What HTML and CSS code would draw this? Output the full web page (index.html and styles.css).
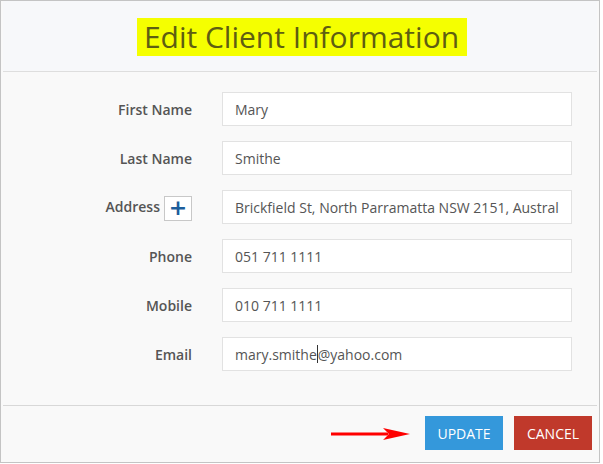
FILE: index.html
```html
<!DOCTYPE html>
<html lang="en">
<head>
    <meta charset="UTF-8">
    <meta name="viewport" content="width=device-width, initial-scale=1.0">
    <title>Edit Client Information</title>
    <link rel="stylesheet" href="styles.css">
</head>
<body>

<div class="dialog">
    <header class="dialog-header">
        <h1 class="dialog-title"><span class="highlight">Edit Client Information</span></h1>
    </header>

    <main class="dialog-body">
        <form class="client-form">
            <label class="field-label" for="firstName">First Name</label>
            <input class="field-input" id="firstName" type="text" value="Mary">

            <label class="field-label" for="lastName">Last Name</label>
            <input class="field-input" id="lastName" type="text" value="Smithe">

            <div class="field-label address-label">
                <label for="address">Address</label>
                <button type="button" class="add-button">+</button>
            </div>
            <input class="field-input" id="address" type="text" value="Brickfield St, North Parramatta NSW 2151, Australia">

            <label class="field-label" for="phone">Phone</label>
            <input class="field-input" id="phone" type="text" value="051 711 1111">

            <label class="field-label" for="mobile">Mobile</label>
            <input class="field-input" id="mobile" type="text" value="010 711 1111">

            <label class="field-label" for="email">Email</label>
            <div class="field-input fake-input">mary.smithe<span class="caret"></span>@yahoo.com</div>
        </form>
    </main>

    <footer class="dialog-footer">
        <!-- red pointer arrow -->
        <svg class="arrow" width="80" height="14" viewBox="0 0 80 14">
            <line x1="0" y1="7" x2="56" y2="7" stroke="#ff0000" stroke-width="3" stroke-linecap="round"/>
            <path d="M52 1 L79 7 L52 13 L58 7 Z" fill="#ff0000"/>
        </svg>
        <button type="button" class="button button-update">Update</button>
        <button type="button" class="button button-cancel">Cancel</button>
    </footer>
</div>

</body>
</html>
```

FILE: styles.css
```css
body {
    margin: 0;
    font-family: "Open Sans", Arial, sans-serif;
    background-color: #ffffff;
    color: #555;
}
.dialog {
    width: 600px;
    height: 463px;
    box-sizing: border-box;
    border: 1px solid #c4c4c4;
    background-color: #f9f9f9;
    display: flex;
    flex-direction: column;
}
.dialog-header {
    height: 70px;
    background-color: #f7f8fa;
    border-bottom: 1px solid #dedede;
    display: flex;
    justify-content: center;
    align-items: flex-start;
    margin: 0 2px;
    padding-left: 4px;
}
.dialog-title {
    margin: 17px 0 0 0;
    font-size: 30px;
    font-weight: 400;
    line-height: 38px;
    color: #5e5e12;
}
.highlight {
    background-color: #f5ff00;
    padding: 0 8px 0 7px;
    display: inline-block;
}
.dialog-body {
    padding: 20px 0 34px 0;
    border-bottom: 1px solid #d8d8d8;
    margin: 0 2px;
}
.client-form {
    display: grid;
    grid-template-columns: 189px 350px;
    column-gap: 30px;
    row-gap: 15px;
    align-items: center;
}
.field-label {
    text-align: right;
    font-size: 14px;
    font-weight: 600;
    color: #555;
}
.address-label {
    display: flex;
    justify-content: flex-end;
    align-items: center;
    gap: 4px;
}
.address-label label {
    margin-top: -2px;
}
.add-button {
    width: 28px;
    height: 25px;
    padding: 0;
    border: 1px solid #c8c8c8;
    background-color: #ffffff;
    color: #1d5d9b;
    font-family: "DejaVu Sans", sans-serif;
    font-size: 22px;
    font-weight: bold;
    line-height: 20px;
    margin-top: 2px;
}
.field-input {
    box-sizing: border-box;
    width: 350px;
    height: 34px;
    padding: 0 12px;
    border: 1px solid #e2e2e2;
    background-color: #ffffff;
    font-family: "Open Sans", Arial, sans-serif;
    font-size: 14px;
    color: #555;
    outline: none;
}
.fake-input {
    display: flex;
    align-items: center;
    white-space: nowrap;
}
.caret {
    display: inline-block;
    width: 1px;
    height: 18px;
    background-color: #333;
}
.dialog-footer {
    flex: 1;
    display: flex;
    justify-content: flex-end;
    align-items: flex-start;
    padding: 10px 7px 0 0;
}
.arrow {
    margin: 11px 14px 0 0;
}
.button {
    height: 34px;
    width: 78px;
    border: none;
    color: #ffffff;
    font-family: "Open Sans", Arial, sans-serif;
    font-size: 14px;
    text-transform: uppercase;
    cursor: pointer;
}
.button-update {
    background-color: #3498db;
    margin-right: 11px;
}
.button-cancel {
    background-color: #c0392b;
}
```
